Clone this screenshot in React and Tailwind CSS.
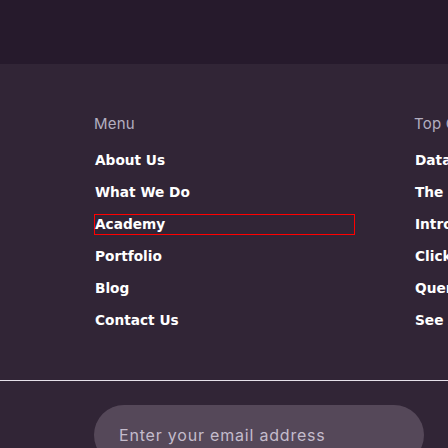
export default function App() {
  const menu = ['About Us', 'What We Do', 'Academy', 'Portfolio', 'Blog', 'Contact Us'];
  const top = ['Data Science', 'The Modern Data Stack', 'Introduction', 'ClickHouse', 'Query Engines', 'See All'];

  const link = "block text-[13.7px] leading-[19px] font-bold text-white border font-['DejaVu_Sans',sans-serif]";

  return (
    <div className="w-[448px] h-[448px] overflow-hidden bg-[#312536] font-['Inter',sans-serif]">
      <div className="h-16 bg-[#261a2c]" />
      <div className="flex gap-[59px] pl-[94px] pt-[49px] whitespace-nowrap">
        <div className="w-[261px] shrink-0">
          <h4 className="text-[15px] leading-[22px] tracking-[0.2px] text-[#b3aec0] mb-[15px]">Menu</h4>
          <ul>
            {menu.map((m) => (
              <li key={m} className="mb-[11px]">
                <a href="#" className={link + (m === 'Academy' ? ' border-[#ff0000]' : ' border-transparent')}>
                  {m}
                </a>
              </li>
            ))}
          </ul>
        </div>
        <div className="shrink-0">
          <h4 className="text-[15px] leading-[22px] tracking-[0.2px] text-[#b3aec0] mb-[15px]">Top Categories</h4>
          <ul>
            {top.map((t) => (
              <li key={t} className="mb-[11px]">
                <a href="#" className={link + ' border-transparent'}>
                  {t}
                </a>
              </li>
            ))}
          </ul>
        </div>
      </div>
      <div className="mt-[38px] h-px bg-[#e6e1ea]" />
      <div className="pl-[94px] pt-6">
        <div className="h-[60px] w-[330px] rounded-[30px] bg-[#554859] pl-[25px] pt-[18px]">
          <span className="block text-[16px] leading-[24px] tracking-[0.8px] text-[#c4bccc]">Enter your email address</span>
        </div>
      </div>
    </div>
  );
}
